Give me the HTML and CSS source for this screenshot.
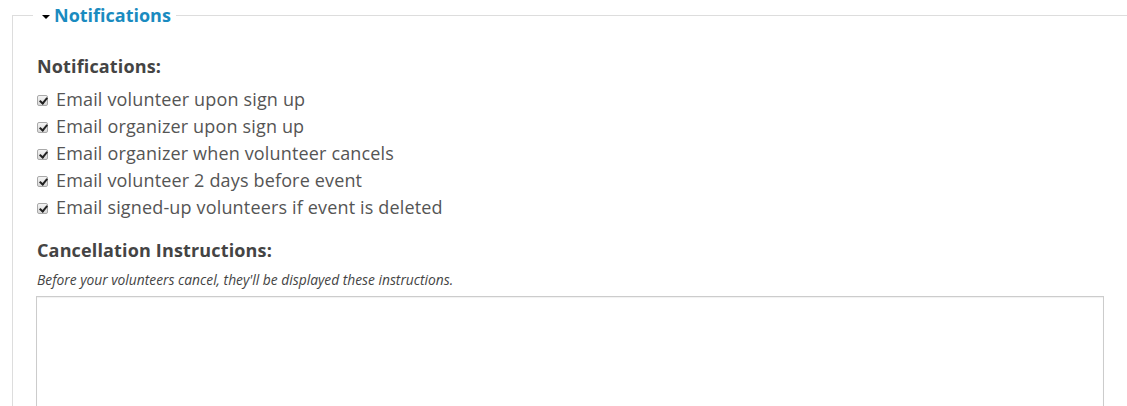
FILE: index.html
```html
<!DOCTYPE html>
<html>
<head>
<meta charset="utf-8">
<link rel="stylesheet" href="styles.css">
</head>
<body>
<fieldset class="panel">
  <legend class="panel-legend"><span class="caret"></span>Notifications</legend>
  <div class="panel-body">
    <div class="field-label">Notifications:</div>
    <ul class="checks">
      <li><span class="box"></span>Email volunteer upon sign up</li>
      <li><span class="box"></span>Email organizer upon sign up</li>
      <li><span class="box"></span>Email organizer when volunteer cancels</li>
      <li><span class="box"></span>Email volunteer 2 days before event</li>
      <li><span class="box"></span>Email signed-up volunteers if event is deleted</li>
    </ul>
    <div class="field-label second">Cancellation Instructions:</div>
    <div class="hint">Before your volunteers cancel, they'll be displayed these instructions.</div>
    <div class="textarea"></div>
  </div>
</fieldset>
</body>
</html>
```
FILE: styles.css
```css
html, body {
  margin: 0;
  padding: 0;
  background: #fff;
  overflow: hidden;
}
body {
  font-family: "Open Sans", "Liberation Sans", sans-serif;
  color: #555;
  height: 406px;
  width: 1127px;
}
.panel {
  margin: 0 0 0 12px;
  width: 1200px;
  border: 1px solid #ddd;
  padding: 0 0 0 20px;
  box-sizing: border-box;
  height: 500px;
}
.panel-legend {
  padding: 0 5px 0 9px;
  font-size: 18px;
  line-height: 30px;
  font-weight: 700;
  color: #1a8bc0;
  display: flex;
  align-items: center;
}
.caret {
  display: inline-block;
  width: 0;
  height: 0;
  border-left: 4px solid transparent;
  border-right: 4px solid transparent;
  border-top: 4px solid #000;
  margin-right: 4px;
  margin-top: 3px;
}
.panel-body {
  padding-left: 4px;
  padding-top: 23px;
}
.field-label {
  font-size: 18px;
  font-weight: 700;
  color: #444;
  line-height: 26px;
  letter-spacing: 0.15px;
}
.field-label.second {
  margin-top: 16px;
}
.checks {
  list-style: none;
  margin: 7px 0 0;
  padding: 0;
}
.checks li {
  font-size: 18px;
  line-height: 27px;
  letter-spacing: 0.16px;
  display: flex;
  align-items: center;
}
.box {
  width: 11px;
  height: 11px;
  box-sizing: border-box;
  border: 1px solid #a9a9a9;
  border-radius: 2px;
  background: linear-gradient(#f4f4f4, #d8d8d8);
  margin: 2px 8px 0 0;
  position: relative;
  flex: none;
}
.box::after {
  content: "";
  position: absolute;
  left: 3px;
  top: 0px;
  width: 3px;
  height: 6px;
  border-right: 2px solid #222;
  border-bottom: 2px solid #222;
  transform: rotate(40deg);
}
.hint {
  font-size: 13.8px;
  font-style: italic;
  color: #444;
  line-height: 20px;
  margin-top: 7px;
}
.textarea {
  margin-top: 6px;
  width: 1068px;
  height: 200px;
  box-sizing: border-box;
  border: 1px solid #ccc;
  box-shadow: inset 0 1px 1px rgba(0, 0, 0, 0.06);
  margin-left: -1px;
}
```
